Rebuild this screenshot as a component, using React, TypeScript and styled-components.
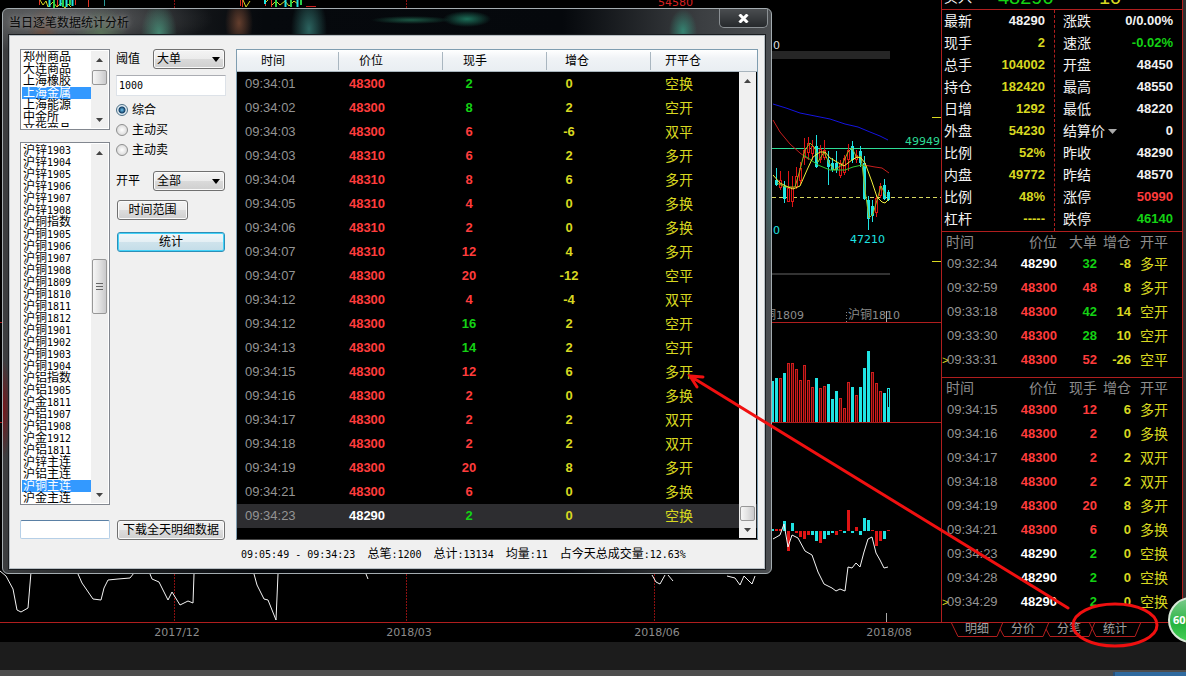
import React, { useState } from "react";
import styled, { createGlobalStyle } from "styled-components";

const cjk = '"Noto Sans CJK SC", sans-serif';
const RED = "#ff3c3c";
const GREEN = "#14d214";
const YELLOW = "#d8d820";
const WHITE = "#f2f2f2";
const LINE = "#b01e1e";
const CYAN = "#1fe3e3";

const GlobalStyle = createGlobalStyle`
  * { box-sizing: border-box; }
  body { margin: 0; background: #000; overflow-x: hidden; }
  button, input, select { font: inherit; color: inherit; }
  ul { list-style: none; margin: 0; padding: 0; }
`;

const Page = styled.div`
  position: relative;
  overflow: hidden;
  min-height: 100vh;
  display: flex;
  flex-direction: column;
  background: #000;
  font: 12px/16px "Liberation Sans", ${cjk};
`;
const Workspace = styled.main`
  display: flex;
  align-items: flex-start;
  border-right: 3px solid #303030;
`;
const ChartArea = styled.section`
  flex: 1;
  min-width: 0;
  display: flex;
`;
const ChartSvg = styled.svg`
  display: block;
  width: 100%;
  height: 642px;
  font-family: "DejaVu Sans", ${cjk};
  font-size: 11px;
`;
const FooterBar = styled.div`
  flex: 1;
  min-height: 28px;
  background: #1c1c1c;
`;
const TaskStrip = styled.div`
  display: flex;
  justify-content: flex-end;
  height: 6px;
  background: #4d4d4d;
`;
const TaskItem = styled.div`
  width: 73px;
  margin-top: 2px;
  background: #2f6a9f;
  border-left: 2px solid #28507a;
`;

/* ---- Quote sidebar ---- */
const Sidebar = styled.aside`
  flex: none;
  width: 242px;
  font-size: 14px;
`;
const QuoteFrame = styled.div`
  border: 1px solid ${LINE};
  border-width: 0 1px;
`;
const BidRow = styled.div`
  height: 10px;
  display: grid;
  grid-template-columns: 56px 56px 1fr;
  align-content: end;
  overflow: hidden;
  padding-bottom: 3px;
  border-bottom: 1px solid ${LINE};
  color: ${YELLOW};
  font-size: 20px;
  line-height: 18px;
`;
const BidLabel = styled.span`
  padding-left: 2px;
  color: ${WHITE};
  font-size: 14px;
`;
const BidValue = styled.span<{ $c: string }>`
  color: ${(p) => p.$c};
`;
const BidSize = styled(BidValue)`
  padding-left: 45px;
`;
const Quotes = styled.div`
  display: grid;
  grid-template-columns: 112px 1fr;
  border-bottom: 1px solid ${LINE};
`;
const QuoteColumn = styled.dl`
  margin: 0;
  padding: 0 9px 1px 2px;
  & + & { padding-left: 8px; border-left: 1px dashed ${LINE}; }
`;
const QuoteRow = styled.div`
  display: flex;
  justify-content: space-between;
  align-items: center;
  height: 22px;
`;
const QuoteLabel = styled.dt`
  display: flex;
  align-items: center;
  gap: 3px;
  color: ${WHITE};
  line-height: 20px;
`;
const QuoteValue = styled.dd<{ $c: string }>`
  margin: 0;
  color: ${(p) => p.$c};
  font-size: 13px;
  font-weight: bold;
`;
const TickTable = styled.table`
  width: 100%;
  table-layout: fixed;
  border-collapse: collapse;
  th, td { padding: 0; text-align: right; font-weight: bold; font-size: 13px; }
  th { height: 20px; color: #8c8c8c; font-weight: normal; font-size: 14px; line-height: 20px; }
  th:first-child { text-align: left; padding-left: 4px; }
  td { height: 24px; line-height: 20px; }
  th:last-child, td:last-child { text-align: left; padding-left: 9px; }
`;
const TickPanel = styled.div`
  padding-bottom: 5px;
  & + & { border-top: 1px solid ${LINE}; padding-bottom: 8px; }
`;
const TickTime = styled.td`
  && { text-align: left; font-weight: normal; color: #949494; white-space: nowrap; padding-left: 5px; }
`;
const Marker = styled.span`
  position: absolute;
  margin-left: -5px;
  color: ${YELLOW};
  font-size: 11px;
`;
const ColorCell = styled.td<{ $c: string }>`
  color: ${(p) => p.$c};
`;
const KindCell = styled.td`
  && { color: ${YELLOW}; font-weight: normal; font-size: 14px; }
`;
const Tabs = styled.nav`
  display: flex;
  height: 19px;
  padding-left: 10px;
  background: linear-gradient(${LINE}, ${LINE}) 0 0 / 100% 1px no-repeat;
`;
const Tab = styled.button`
  position: relative;
  width: 52px;
  height: 15px;
  margin-right: -6px;
  padding: 0;
  border: 0;
  background: none;
  color: #a0a0a0;
  font-size: 12px;
  line-height: 15px;
`;
const TabShape = styled.svg`
  position: absolute;
  left: 0;
  top: 0;
`;

/* ---- Dialog ---- */
const Dialog = styled.section`
  position: absolute;
  left: 2px;
  top: 8px;
  width: 770px;
  padding: 0 6px 4px;
  border: 1px solid #a4acb0;
  border-radius: 6px;
  background:
    radial-gradient(ellipse 16px 24px at 40px 22px, #6e4a38cc, transparent),
    radial-gradient(ellipse 26px 26px at 98px 24px, #5c7a5acc, transparent),
    radial-gradient(ellipse 18px 30px at 156px 24px, #4a9a80cc, transparent),
    radial-gradient(ellipse 14px 26px at 236px 14px, #7a4a34cc, transparent),
    radial-gradient(ellipse 18px 36px at 306px 20px, #357a74cc, transparent),
    radial-gradient(ellipse 40px 4px at 408px 11px, #1b5744, transparent),
    radial-gradient(ellipse 24px 8px at 464px 10px, #1c6e58, transparent),
    radial-gradient(ellipse 14px 22px at 680px 22px, #35967fcc, transparent),
    radial-gradient(ellipse 8px 80px at 768px 180px, #3c6a6a, transparent),
    radial-gradient(ellipse 8px 50px at 0 400px, #7a1418, transparent),
    radial-gradient(ellipse 150px 34px at 60px 10px, #66686a, transparent),
    linear-gradient(90deg, #3c3e40 0, #26282a 90px, #06090d 260px, #05080c 560px, #3c3f42 700px, #4a4d50 100%);
`;
const TitleBar = styled.header`
  display: flex;
  justify-content: space-between;
  height: 26px;
`;
const Title = styled.h1`
  margin: 0;
  font: 12px/26px ${cjk};
  color: #080808;
  text-shadow: 0 0 5px #8a8a8a, 0 0 8px #888;
`;
const CloseButton = styled.button`
  width: 49px;
  height: 19px;
  margin-right: -3px;
  padding: 0;
  display: grid;
  place-items: center;
  border: 1px solid #8b9094;
  border-top: 0;
  border-radius: 0 0 5px 5px;
  background: linear-gradient(#4a4d50, #26292c);
`;
const Client = styled.div`
  border: 1px solid #b8bfc4;
  outline: 1px solid #1a1d20;
  background: #f0f0f0;
  padding: 13px 6px 3px 10px;
  color: #000;
`;
const Body = styled.div`
  display: grid;
  grid-template-columns: 90px 110px 1fr;
  align-items: stretch;
`;
const ListColumn = styled.div`
  display: flex;
  flex-direction: column;
`;
const ListFrame = styled.div<{ $h: number }>`
  display: flex;
  height: ${(p) => p.$h}px;
  margin-bottom: 12px;
  border: 1px solid #82878f;
  background: #fff;
  padding: 1px;
`;
const ListItems = styled.ul`
  flex: 1;
  overflow: hidden;
`;
const ListItem = styled.li<{ $on: boolean }>`
  height: 12px;
  padding-left: 1px;
  line-height: 12px;
  white-space: nowrap;
  color: ${(p) => (p.$on ? "#fff" : "#000")};
  background: ${(p) => (p.$on ? "#3399ff" : "transparent")};
  cursor: default;
`;
const Num = styled.span`
  font-family: "DejaVu Sans Mono", monospace;
  font-size: 10px;
  white-space: pre;
`;
const ScrollBar = styled.div`
  display: flex;
  flex-direction: column;
  width: 17px;
  background: #f0f0f0;
`;
const ScrollArrow = styled.button`
  height: 17px;
  padding: 0;
  border: 0;
  background: none;
  display: grid;
  place-items: center;
`;
const Track = styled.div<{ $before: number }>`
  flex: 1;
  padding: ${(p) => p.$before}px 1px 0;
`;
const Thumb = styled.div<{ $h: number }>`
  height: ${(p) => p.$h}px;
  display: grid;
  place-items: center;
  border: 1px solid #979797;
  border-radius: 2px;
  background: linear-gradient(90deg, #f6f6f6, #e4e4e4 45%, #c9c9cb);
`;
const PlainInput = styled.input`
  width: 100%;
  height: 19px;
  margin-top: 3px;
  border: 1px solid #b5cfe7;
  border-top-color: #5a80a5;
  border-radius: 2px;
  background: #fff;
`;
const Controls = styled.form`
  display: flex;
  flex-direction: column;
  padding-left: 6px;
  margin-right: -6px;
`;
const Field = styled.div`
  display: flex;
  justify-content: space-between;
  align-items: center;
  height: 20px;
  padding-right: 1px;
`;
const FieldAgain = styled(Field)`
  margin: 11px 0 9px;
`;
const SelectBox = styled.div`
  position: relative;
  width: 72px;
`;
const Select = styled.select`
  display: block;
  appearance: none;
  width: 100%;
  height: 20px;
  padding: 0 3px;
  border: 1px solid #707070;
  border-radius: 3px;
  background: linear-gradient(#f4f4f4, #ebebeb 50%, #dadada 51%, #cfcfcf);
  box-shadow: inset 0 0 0 1px #fafafa;
`;
const SelectArrow = styled.svg`
  position: absolute;
  right: 5px;
  top: 8px;
  pointer-events: none;
`;
const AmountInput = styled.input`
  width: 100%;
  height: 21px;
  margin: 6px 0 4px;
  padding: 0 2px;
  border: 1px solid #dde2e8;
  border-top-color: #abadb3;
  background: #fff;
  font: 10px/14px "DejaVu Sans Mono", monospace;
`;
const RadioRow = styled.label`
  display: flex;
  align-items: center;
  gap: 4px;
  height: 20px;
`;
const Radio = styled.input`
  appearance: none;
  width: 12px;
  height: 12px;
  margin: 0;
  border: 1px solid #8e8f8f;
  border-radius: 50%;
  background: radial-gradient(circle, #fff 0, #e2e2e2 60%, #cfcfcf);
  &:checked {
    border-color: #4c6f86;
    background: radial-gradient(circle, #6fc3ee 0, #123f66 3px, #e4eef4 4px, #c7d5de);
  }
`;
const PushButton = styled.button<{ $w: number }>`
  width: ${(p) => p.$w}px;
  height: 20px;
  margin-left: 1px;
  padding: 0;
  line-height: 18px;
  white-space: nowrap;
  border: 1px solid #707070;
  border-radius: 3px;
  background: linear-gradient(#f3f3f3, #ebebeb 50%, #dddddd 51%, #cfcfcf);
  box-shadow: inset 0 0 0 1px #fbfbfb;
`;
const DefaultButton = styled(PushButton)`
  margin-top: 12px;
  border-color: #2c8fb8;
  background: linear-gradient(#f0f7fa, #e4eff4 50%, #cfe3ec 51%, #c3dde8);
  box-shadow: inset 0 0 0 1px #43d3f9;
`;
const DownloadButton = styled(PushButton)`
  margin-top: auto;
`;

const GridFrame = styled.div`
  position: relative;
  margin-left: 16px;
  height: 491px;
  border: 1px solid #7f9db0;
  border-bottom-color: #444;
  background: #000;
`;
const DataTable = styled.table`
  width: 100%;
  table-layout: fixed;
  border-collapse: separate;
  border-spacing: 0;
  td {
    height: 24px;
    padding: 0 8px;
    font-size: 13px;
    font-weight: bold;
    line-height: 20px;
    text-align: center;
  }
`;
const HeadCell = styled.th<{ $pad: number }>`
  height: 22px;
  padding: 0 0 0 ${(p) => p.$pad}px;
  text-align: left;
  font-weight: normal;
  border-bottom: 1px solid #a8b4bd;
  background:
    linear-gradient(#a9b6c0, #a9b6c0) 100% 50% / 1px 18px no-repeat,
    linear-gradient(#ffffff 0, #f0f3f6 40%, #e9eef2);
  &:last-child { background: linear-gradient(#ffffff 0, #f0f3f6 40%, #e9eef2); }
`;
const DataRow = styled.tr<{ $on: boolean }>`
  background: ${(p) => (p.$on ? "#2d2d30" : "#000")};
`;
const TimeCell = styled.td`
  && { text-align: left; font-weight: normal; color: #949494; }
`;
const ValueCell = styled.td<{ $c: string; $shift: number }>`
  && { padding: 0 ${(p) => p.$shift}px 0 0; color: ${(p) => p.$c}; }
`;
const OffsetCell = styled.td`
  && { text-align: left; padding-left: 14px; color: ${YELLOW}; font-weight: normal; font-size: 14px; }
`;
const GridScroll = styled.div`
  position: absolute;
  right: 1px;
  top: 22px;
  bottom: 1px;
  display: flex;
`;
const StatusLine = styled.footer`
  display: flex;
  gap: 12px;
  height: 25px;
  align-items: center;
  padding: 4px 0 0 221px;
  white-space: nowrap;
`;
const Annotation = styled.svg`
  position: absolute;
  right: 0;
  top: 0;
  pointer-events: none;
`;
const Ball = styled.button`
  position: absolute;
  right: -28px;
  top: 597px;
  width: 46px;
  height: 46px;
  padding: 0 0 0 3px;
  text-align: left;
  border: 2px solid #d8e8d8;
  border-radius: 50%;
  background: linear-gradient(#79c98a, #27b53f 60%, #45cf55);
  color: #fff;
  font: bold 11px/40px "Open Sans", sans-serif;
`;

/* ---- Data ---- */
const exchanges = ["郑州商品", "大连商品", "上海橡胶", "上海金属", "上海能源", "中金所", "文华商品"];
const contracts = [
  "沪锌1903", "沪锌1904", "沪锌1905", "沪锌1906", "沪锌1907", "沪锌1908", "沪铜指数", "沪铜1905",
  "沪铜1906", "沪铜1907", "沪铜1908", "沪铜1809", "沪铜1810", "沪铜1811", "沪铜1812", "沪铜1901",
  "沪铜1902", "沪铜1903", "沪铜1904", "沪铝指数", "沪铝1905", "沪金1811", "沪铝1907", "沪铝1908",
  "沪金1912", "沪铝1811", "沪锌主连", "沪铝主连", "沪铜主连", "沪金主连",
];

type Tick = [time: string, price: number, size: number, side: "r" | "g", add: number, kind: string];
const ticks: Tick[] = [
  ["09:34:01", 48300, 2, "g", 0, "空换"],
  ["09:34:02", 48300, 8, "g", 2, "空开"],
  ["09:34:03", 48300, 6, "r", -6, "双平"],
  ["09:34:03", 48310, 6, "r", 2, "多开"],
  ["09:34:04", 48310, 8, "r", 6, "多开"],
  ["09:34:05", 48310, 4, "r", 0, "多换"],
  ["09:34:06", 48310, 2, "r", 0, "多换"],
  ["09:34:07", 48310, 12, "r", 4, "多开"],
  ["09:34:07", 48300, 20, "r", -12, "空平"],
  ["09:34:12", 48300, 4, "r", -4, "双平"],
  ["09:34:12", 48300, 16, "g", 2, "空开"],
  ["09:34:13", 48300, 14, "g", 2, "空开"],
  ["09:34:15", 48300, 12, "r", 6, "多开"],
  ["09:34:16", 48300, 2, "r", 0, "多换"],
  ["09:34:17", 48300, 2, "r", 2, "双开"],
  ["09:34:18", 48300, 2, "r", 2, "双开"],
  ["09:34:19", 48300, 20, "r", 8, "多开"],
  ["09:34:21", 48300, 6, "r", 0, "多换"],
  ["09:34:23", 48290, 2, "g", 0, "空换"],
];
const bigTicks: Tick[] = [
  ["09:32:34", 48290, 32, "g", -8, "多平"],
  ["09:32:59", 48300, 48, "r", 8, "多开"],
  ["09:33:18", 48300, 42, "g", 14, "空开"],
  ["09:33:30", 48300, 28, "g", 10, "空开"],
  ["09:33:31", 48300, 52, "r", -26, "空平"],
];
const lastTicks: Tick[] = [
  ...ticks.slice(12),
  ["09:34:28", 48290, 2, "g", 0, "空换"],
  ["09:34:29", 48290, 2, "g", 0, "空换"],
];
const leftQuotes = [
  ["最新", "48290", WHITE], ["现手", "2", YELLOW], ["总手", "104002", YELLOW], ["持仓", "182420", YELLOW],
  ["日增", "1292", YELLOW], ["外盘", "54230", YELLOW], ["比例", "52%", YELLOW], ["内盘", "49772", YELLOW],
  ["比例", "48%", YELLOW], ["杠杆", "-----", YELLOW],
];
const rightQuotes = [
  ["涨跌", "0/0.00%", WHITE], ["速涨", "-0.02%", GREEN], ["开盘", "48450", WHITE], ["最高", "48550", WHITE],
  ["最低", "48220", WHITE], ["结算价", "0", WHITE], ["昨收", "48290", WHITE], ["昨结", "48570", WHITE],
  ["涨停", "50990", RED], ["跌停", "46140", GREEN],
];

const priceColor = (p: number) => (p === 48290 ? "#ffffff" : RED);
const sideColor = (s: "r" | "g") => (s === "r" ? RED : GREEN);

/* Volume and histogram bars: one every 4px from x = 773. Letter = colour. */
const volume: [number, "r" | "c"][] = [
  [41, "c"], [44, "c"], [44, "r"], [49, "c"], [59, "r"], [59, "r"], [53, "r"], [42, "r"], [57, "r"], [42, "r"],
  [35, "r"], [44, "c"], [34, "r"], [36, "r"], [38, "c"], [23, "c"], [31, "c"], [24, "r"], [14, "r"], [40, "r"],
  [35, "c"], [27, "r"], [35, "c"], [54, "c"], [71, "c"], [50, "r"], [39, "r"], [31, "r"], [29, "c"],
];
const histogram: [number, "r" | "c"][] = [
  [2, "c"], [2, "r"], [2, "r"], [10, "c"], [-20, "r"], [8, "c"], [-2, "r"], [-6, "r"], [-8, "r"], [-4, "r"],
  [-4, "c"], [-10, "c"], [-12, "r"], [-8, "c"], [-4, "c"], [-2, "c"], [-4, "r"], [1, "r"], [-2, "c"], [21, "r"],
  [-2, "c"], [4, "r"], [-4, "c"], [13, "c"], [11, "c"], [1, "r"], [-15, "r"], [-10, "r"], [-8, "c"], [1, "r"],
];
const barX = (i: number) => 770 + i * 4;

/* x, high, low, body top, body bottom, colour */
const candles: [number, number, number, number, number, "r" | "c"][] = [
  [776, 168, 186, 180, 185, "c"], [780, 171, 190, 180, 188, "r"], [784, 181, 203, 186, 199, "c"],
  [788, 171, 202, 188, 202, "r"], [792, 176, 207, 187, 202, "r"], [796, 167, 189, 176, 187, "r"],
  [800, 162, 185, 168, 181, "r"], [804, 138, 165, 150, 158, "r"], [808, 137, 160, 143, 153, "r"],
  [812, 140, 160, 146, 154, "r"], [816, 135, 168, 146, 167, "c"], [820, 145, 163, 149, 160, "r"],
  [824, 140, 160, 150, 158, "r"], [828, 151, 185, 160, 167, "c"], [832, 158, 172, 163, 170, "c"],
  [836, 151, 173, 163, 170, "c"], [840, 160, 178, 163, 176, "r"], [844, 155, 175, 158, 173, "r"],
  [848, 144, 171, 150, 160, "r"], [852, 141, 163, 146, 160, "c"], [856, 150, 163, 155, 160, "r"],
  [860, 146, 167, 151, 163, "c"], [864, 156, 200, 163, 199, "c"], [868, 196, 230, 200, 219, "c"],
  [872, 200, 222, 206, 216, "c"], [876, 196, 217, 198, 213, "r"], [880, 183, 198, 186, 196, "r"],
  [884, 179, 200, 185, 199, "c"], [888, 190, 201, 192, 200, "c"],
];

const mixed = (text: string) =>
  text.split(/([\d:.%\- ]+)/).map((part, i) => (i % 2 ? <Num key={i}>{part}</Num> : part));

const Arrow = ({ up }: { up?: boolean }) => (
  <svg width="7" height="4" aria-hidden="true">
    <path d={up ? "M0 4 3.500 0 7 4Z" : "M0 0H7L3.500 4Z"} fill="#444" />
  </svg>
);

function Scroller({ before, size, grip }: { before: number; size: number; grip?: boolean }) {
  return (
    <ScrollBar>
      <ScrollArrow type="button" aria-label="向上滚动"><Arrow up /></ScrollArrow>
      <Track $before={before}>
        <Thumb $h={size}>
          {grip && (
            <svg width="7" height="8" stroke="#666" aria-hidden="true"><path d="M0 .5h7M0 3.500h7M0 6.500h7" /></svg>
          )}
        </Thumb>
      </Track>
      <ScrollArrow type="button" aria-label="向下滚动"><Arrow /></ScrollArrow>
    </ScrollBar>
  );
}

function ListBox(props: { label: string; items: string[]; initial: string; h: number; before: number; size: number; grip?: boolean }) {
  const [value, setValue] = useState(props.initial);
  return (
    <ListFrame $h={props.h}>
      <ListItems role="listbox" aria-label={props.label}>
        {props.items.map((item) => (
          <ListItem key={item} role="option" aria-selected={item === value} $on={item === value} onClick={() => setValue(item)}>
            {mixed(item)}
          </ListItem>
        ))}
      </ListItems>
      <Scroller before={props.before} size={props.size} grip={props.grip} />
    </ListFrame>
  );
}

function Dropdown({ id, options }: { id: string; options: string[] }) {
  return (
    <SelectBox>
      <Select id={id}>{options.map((o) => <option key={o}>{o}</option>)}</Select>
      <SelectArrow width="8" height="5"><path d="M0 0H8L4 5Z" /></SelectArrow>
    </SelectBox>
  );
}

function Chart() {
  const fill = { r: "#e01414", c: CYAN };
  return (
    <ChartArea>
      <ChartSvg viewBox="0 0 941 642" preserveAspectRatio="xMaxYMin meet" role="img" aria-label="沪铜走势图">
        <g fill="none" strokeWidth="1">
          <path d="M39.500 0V5M57.500 0V6M75.500 0V5M88.500 0V7M240.500 0V6M242.500 0V7M265.500 0V6M271.500 0V7" stroke="#e03020" />
          <path d="M40 0l3 5 3-4 2 6 5-5 4 5 4-4 4 5 3-4 3 3M243 0l3 7 4-6M264 4l4-4M272 5l4-4 4 4 5-4 4 5 5-5 4 3" stroke="#d8d820" />
          <path d="M49.500 0V7M60.500 0V6M66.500 0V7M72.500 0V6M265 0V4M285.500 0V7M297.500 0V7" stroke={CYAN} strokeWidth="2" />
          <path d="M54 0V8M63 0V7M70 0V5M276 0V7M291 0V7M301 0V5" stroke="#2ad04a" strokeWidth="2" />
          <path d="M306 6.500h10" stroke="#c22" />
          <path d="M104.500 0V6" stroke="#2a9a9a" />
          <path d="M174.500 574V622M174.500 0V8M406.500 0V8M406.500 574V622M654.500 574V622" stroke="#8c1010" strokeDasharray="2 1" />
        </g>
        <text x="658" y="6" fill="#d82020">54580</text>
        <text x="773" y="49" fill="#ddd">0</text>
        <rect x="772" y="51" width="118" height="8" fill="#262626" />
        <rect x="772" y="273" width="118" height="2" fill="#333" />
        <path d="M772 148.500H941" stroke="#2ddc96" />
        <path d="M772 197.500H941" stroke="#d8d860" strokeDasharray="4 3" />
        <path d="M932 117.500H941M932 261.500H941" stroke="#d8d820" />

        {candles.map(([x, hi, lo, top, bottom, c]) => (
          <g key={x} stroke={fill[c]}>
            <path d={`M${x + 0.5} ${hi}V${lo}`} />
            <rect x={x - 0.5} y={top + 0.5} width="2" height={bottom - top - 1} fill={c === "c" ? CYAN : "#000"} />
          </g>
        ))}
        <g fill="none">
          <path d="M773 104 786 108 800 113 815 116 830 119 845 124 858 127 870 132 880 136 888 140" stroke="#1414e0" />
          <path d="M773 120 780 132 790 144 800 153 808 159M864 165 875 167 882 168 889 173" stroke="#c81e1e" />
          <path d="M803 155 808 158 818 165 830 170 845 170 853 167 862 165 867 167" stroke="#32c832" />
          <path d="M777 183 785 187 795 187 800 170 805 150 810 143 815 148 818 162 824 152 829 163 834 170 842 165 848 152 852 148 857 158 861 156 865 190 869 218 873 214 877 200 881 186 886 196" stroke="#9ab81e" />
          <path d="M773 175 780 183 788 187 793 189 800 186 807 170 813 157 820 152 825 152 830 158 837 162 844 166 852 160 857 157 861 158 865 163 872 182 877 197 882 202 885 203 889 199" stroke="#f0f03c" />
        </g>
        <text x="905" y="145" fill="#2ddc96">49949</text>
        <text x="850" y="243" fill={CYAN}>47210</text>
        <text x="773" y="234" fill={CYAN}>0</text>
        <g fill="#8c8c8c" fontSize="12">
          <text x="764" y="319">铜<tspan fontSize="11">1809</tspan></text>
          <text x="848" y="319">沪铜<tspan fontSize="11">1810</tspan></text>
        </g>
        <path d="M846.500 312V322" stroke="#888" strokeDasharray="1 2" />
        <path d="M886.500 311V322M886.500 613V622" stroke="#aaa" />

        {volume.map(([h, c], i) =>
          c === "c" ? (
            <rect key={i} x={barX(i) + 1} y={422 - h} width="3" height={h} fill={CYAN} />
          ) : (
            <rect key={i} x={barX(i) + 1.5} y={422.5 - h} width="2" height={h} fill="#500808" stroke="#d01c1c" />
          )
        )}
        <rect x="887.500" y="388.500" width="2" height="34" fill="none" stroke={CYAN} />
        <rect x="887" y="407" width="3" height="15" fill={CYAN} />
        {histogram.map(([v, c], i) => (
          <rect key={i} x={barX(i) + 1} y={v > 0 ? 531 - v : 531} width="3" height={Math.abs(v)} fill={fill[c]} />
        ))}
        <g fill="none" stroke="#f4f4f4">
          <path d="M773 539 780 535 784 524 788 547 792 535 798 538 805 551 812 555 818 572 824 584 832 588 836 591 840 589 845 591 848 567 852 568 856 563 860 567 864 552 868 539 872 537 876 553 880 560 884 568 888 567" />
          <path d="M0 571 6 576 13 589 17 610 21 612 28 608 31 572M78 574 82 583 93 599 101 600 104 588 108 580 118 579 130 578 134 573M150 574 152 579 159 582 168 600 172 592 180 605 188 601 193 603 194 574M254 574 257 585 264 599 268 600 276 620 278 574M366 574 368 579M652 575 656 582 660 584 665 575M668 575 673 581M727 576 735 578 740 585 744 576 752 584 755 576" />
        </g>
        <path d="M0 322.500H941M0 422.500H941M0 622.500H941" stroke={LINE} />
        <g fill="#8c8c8c" textAnchor="middle">
          <text x="177" y="636">2017/12</text>
          <text x="409" y="636">2018/03</text>
          <text x="657" y="636">2018/06</text>
          <text x="889" y="636">2018/08</text>
        </g>
      </ChartSvg>
    </ChartArea>
  );
}

function Ticks({ sizeLabel, rows }: { sizeLabel: string; rows: Tick[] }) {
  return (
    <TickPanel>
      <TickTable>
        <colgroup>
          <col style={{ width: 60 }} /><col style={{ width: 55 }} /><col style={{ width: 40 }} /><col style={{ width: 34 }} /><col />
        </colgroup>
        <thead>
          <tr><th>时间</th><th>价位</th><th>{sizeLabel}</th><th>增仓</th><th>开平</th></tr>
        </thead>
        <tbody>
          {rows.map(([time, price, size, side, add, kind], i) => (
            <tr key={i}>
              <TickTime>{i === rows.length - 1 && <Marker>&gt;</Marker>}{time}</TickTime>
              <ColorCell $c={priceColor(price)}>{price}</ColorCell>
              <ColorCell $c={sideColor(side)}>{size}</ColorCell>
              <ColorCell $c={YELLOW}>{add}</ColorCell>
              <KindCell>{kind}</KindCell>
            </tr>
          ))}
        </tbody>
      </TickTable>
    </TickPanel>
  );
}

function QuoteSidebar() {
  return (
    <Sidebar>
      <QuoteFrame>
        <BidRow>
          <BidLabel>买入</BidLabel>
          <BidValue $c={GREEN}>48290</BidValue>
          <BidSize $c={YELLOW}>10</BidSize>
        </BidRow>
        <Quotes>
          {[leftQuotes, rightQuotes].map((list, k) => (
            <QuoteColumn key={k}>
              {list.map(([label, value, color], i) => (
                <QuoteRow key={i}>
                  <QuoteLabel>
                    {label}
                    {label === "结算价" && <svg width="9" height="5" aria-hidden="true"><path d="M0 0H9L4.500 5Z" fill="#aaa" /></svg>}
                  </QuoteLabel>
                  <QuoteValue $c={color}>{value}</QuoteValue>
                </QuoteRow>
              ))}
            </QuoteColumn>
          ))}
        </Quotes>
        <Ticks sizeLabel="大单" rows={bigTicks} />
        <Ticks sizeLabel="现手" rows={lastTicks} />
      </QuoteFrame>
      <Tabs>
        {["明细", "分价", "分笔", "统计"].map((t, i) => (
          <Tab key={t} type="button">
            <TabShape width="52" height="15" fill="none" stroke={LINE} aria-hidden="true">
              <path d={i % 3 ? "M3 7 7 14.500H46L52 0" : "M0 0 7 14.500H46L52 0"} />
            </TabShape>
            {t}
          </Tab>
        ))}
      </Tabs>
    </Sidebar>
  );
}

function StatsDialog() {
  const [side, setSide] = useState("综合");
  const heads: [string, number][] = [["时间", 24], ["价位", 20], ["现手", 20], ["增仓", 18], ["开平仓", 14]];
  return (
    <Dialog role="dialog" aria-labelledby="dialog-title">
      <TitleBar>
        <Title id="dialog-title">当日逐笔数据统计分析</Title>
        <CloseButton type="button" aria-label="关闭">
          <svg width="11" height="9" fill="none" stroke="#fff" strokeWidth="3"><path d="M1.500 .5 9.500 8.500M9.500 .5 1.500 8.500" /></svg>
        </CloseButton>
      </TitleBar>
      <Client>
        <Body>
          <ListColumn>
            <ListBox label="交易所" items={exchanges} initial="上海金属" h={81} before={2} size={15} />
            <ListBox label="合约" items={contracts} initial="沪铜主连" h={363} before={98} size={55} grip />
            <PlainInput aria-label="搜索合约" />
          </ListColumn>
          <Controls onSubmit={(e) => e.preventDefault()}>
            <Field>
              <label htmlFor="threshold">阈值</label>
              <Dropdown id="threshold" options={["大单", "中单", "小单"]} />
            </Field>
            <AmountInput aria-label="阈值数量" defaultValue="1000" />
            {["综合", "主动买", "主动卖"].map((s) => (
              <RadioRow key={s}>
                <Radio type="radio" name="side" checked={side === s} onChange={() => setSide(s)} />
                {s}
              </RadioRow>
            ))}
            <FieldAgain>
              <label htmlFor="offset">开平</label>
              <Dropdown id="offset" options={["全部", "开仓", "平仓"]} />
            </FieldAgain>
            <PushButton type="button" $w={71}>时间范围</PushButton>
            <DefaultButton type="submit" $w={108}>统计</DefaultButton>
            <DownloadButton type="button" $w={108}>下载全天明细数据</DownloadButton>
          </Controls>
          <GridFrame>
            <DataTable>
              <colgroup>
                <col style={{ width: 102 }} /><col style={{ width: 104 }} /><col style={{ width: 104 }} /><col style={{ width: 104 }} /><col />
              </colgroup>
              <thead>
                <tr>{heads.map(([h, pad]) => <HeadCell key={h} $pad={pad}>{h}</HeadCell>)}</tr>
              </thead>
              <tbody>
                {ticks.map(([time, price, size, s, add, kind], i) => (
                  <DataRow key={i} $on={i === ticks.length - 1}>
                    <TimeCell>{time}</TimeCell>
                    <ValueCell $c={priceColor(price)} $shift={48}>{price}</ValueCell>
                    <ValueCell $c={sideColor(s)} $shift={52}>{size}</ValueCell>
                    <ValueCell $c={YELLOW} $shift={60}>{add}</ValueCell>
                    <OffsetCell>{kind}</OffsetCell>
                  </DataRow>
                ))}
              </tbody>
            </DataTable>
            <GridScroll><Scroller before={417} size={15} /></GridScroll>
          </GridFrame>
        </Body>
        <StatusLine>
          <span>{mixed("09:05:49 - 09:34:23")}</span>
          <span>{mixed("总笔:1200")}</span>
          <span>{mixed("总计:13134")}</span>
          <span>{mixed("均量:11")}</span>
          <span>{mixed("占今天总成交量:12.63%")}</span>
        </StatusLine>
      </Client>
    </Dialog>
  );
}

export default function App() {
  return (
    <Page>
      <GlobalStyle />
      <Workspace>
        <Chart />
        <QuoteSidebar />
      </Workspace>
      <FooterBar />
      <TaskStrip><TaskItem /></TaskStrip>
      <StatsDialog />
      <Annotation width="506" height="660" viewBox="680 0 506 660" fill="none" stroke="#f01010" strokeWidth="3" strokeLinecap="round" aria-hidden="true">
        <path d="M1068 608 690 376M703 377 690 376 697 387" />
        <ellipse cx="1115" cy="625" rx="42" ry="21" />
      </Annotation>
      <Ball type="button">60</Ball>
    </Page>
  );
}
